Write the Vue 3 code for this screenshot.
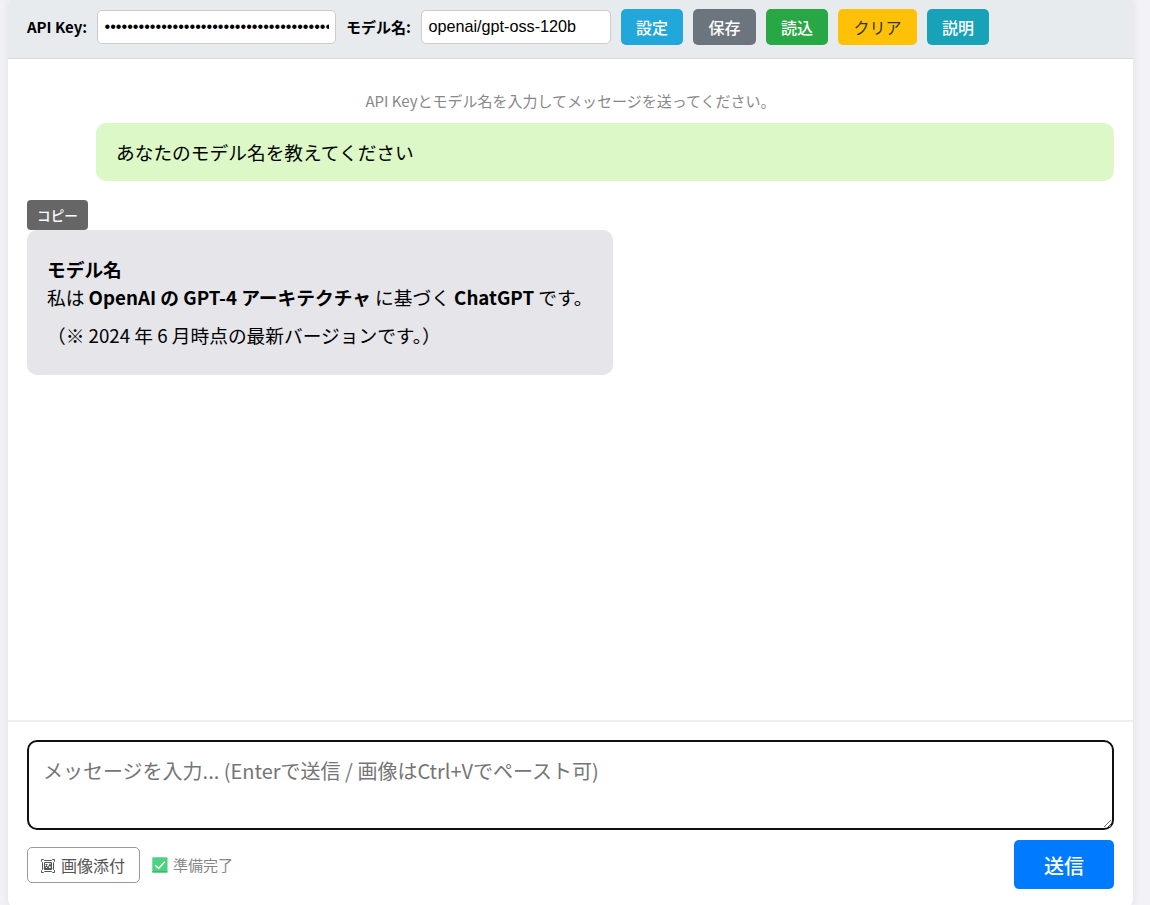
<script setup>
import { ref } from 'vue'

const apiKey = ref('x'.repeat(44))
const model = ref('openai/gpt-oss-120b')
const message = ref('')
const actions = [
  { label: '設定', kind: 'config' },
  { label: '保存', kind: 'save' },
  { label: '読込', kind: 'load' },
  { label: 'クリア', kind: 'clear' },
  { label: '説明', kind: 'help' },
]
</script>

<template>
  <div class="page">
    <main class="app">
      <header class="bar">
        <label class="lbl" for="key">API Key:</label>
        <input id="key" v-model="apiKey" class="field key" type="password" />
        <label class="lbl second" for="model">モデル名:</label>
        <input id="model" v-model="model" class="field model" type="text" spellcheck="false" />
        <button v-for="a in actions" :key="a.kind" class="btn" :class="a.kind">{{ a.label }}</button>
      </header>

      <section class="chat">
        <p class="notice">API Keyとモデル名を入力してメッセージを送ってください。</p>
        <div class="user">あなたのモデル名を教えてください</div>
        <button class="copy">コピー</button>
        <div class="bot">
          <p><strong>モデル名</strong><br />私は <strong>OpenAI の GPT-4 アーキテクチャ</strong> に基づく <strong>ChatGPT</strong> です。</p>
          <p>（※ 2024 年 6 月時点の最新バージョンです。）</p>
        </div>
      </section>

      <footer class="composer">
        <textarea v-model="message" class="input" placeholder="メッセージを入力... (Enterで送信 / 画像はCtrl+Vでペースト可)"></textarea>
        <div class="row">
          <button class="attach">
            <svg class="pic" viewBox="0 0 14 14" fill="none" stroke="#555" stroke-width="1">
              <path d="M.5 .5h2l1 1h7l1-1h2v2l-1 1v7l1 1v2h-2l-1-1h-7l-1 1h-2v-2l1-1v-7l-1-1z" />
              <path d="M3.5 3.5h7v7h-7z" />
              <path d="M3 10l2.5-3 1.5 2 2-4 2 5M4.5 5.5h2M3.5 9.5h7" stroke-width="1.1" />
            </svg>
            <span>画像添付</span>
          </button>
          <svg class="check" viewBox="0 0 16 16">
            <rect x=".3" y=".3" width="15.2" height="15.2" rx="1" fill="#4fd184" />
            <path d="M.3 14.8h15.2" stroke="#35b56c" stroke-width="1.2" />
            <path d="M3.2 8.2l3.4 3.3 6.2-6.7" fill="none" stroke="#fff" stroke-width="1.5" />
          </svg>
          <span class="status">準備完了</span>
          <button class="send">送信</button>
        </div>
      </footer>
    </main>
  </div>
</template>

<style>
body {
  margin: 0;
  background: #f2f2f7;
}
</style>

<style scoped>
* {
  box-sizing: border-box;
}
.page {
  height: 905px;
  overflow: hidden;
  background: #f2f2f7;
  font-family: "Noto Sans CJK JP", "Noto Sans", sans-serif;
  color: #000;
}
button {
  font-family: inherit;
  border: 0;
  padding: 0;
  margin: 0;
  white-space: nowrap;
}
.app {
  width: 1125px;
  height: 914px;
  margin: -5px 0 0 8px;
  display: flex;
  flex-direction: column;
  background: #fff;
  border-radius: 10px;
  box-shadow: 0 0 10px rgba(0, 0, 0, 0.08);
  overflow: hidden;
}
.bar {
  height: 64px;
  flex: none;
  display: flex;
  align-items: flex-start;
  padding: 14px 19px 0;
  background: #e7ebee;
  border-bottom: 1px solid #d6dade;
}
.lbl {
  width: 60px;
  margin-right: 10px;
  font-size: 15px;
  font-weight: 700;
  line-height: 36px;
  white-space: nowrap;
}
.second {
  width: 64px;
  margin-left: -1px;
  margin-right: 11px;
}
.field {
  height: 34px;
  margin-top: 1px;
  border: 1px solid #ccc;
  border-radius: 5px;
  padding: 0 6px 2px 6.5px;
  background: #fff;
  color: #000;
  font: 16.2px "Liberation Sans", Arial, sans-serif;
  outline: none;
}
.key {
  width: 239px;
  margin-right: 11px;
}
.model {
  width: 190px;
  margin-right: 10px;
}
.btn {
  height: 36px;
  width: 62px;
  margin-right: 10px;
  border-radius: 5px;
  font-size: 16px;
  font-weight: 500;
  line-height: 36px;
  color: #fff;
}
.config { background: #22a7da; }
.save { background: #6c757d; width: 63px; }
.load { background: #28a745; }
.clear { background: #ffc107; color: #333; width: 79px; font-weight: 400; }
.help { background: #17a2b8; }
.chat {
  flex: 1;
  padding: 31px 19px 0;
  display: flex;
  flex-direction: column;
  align-items: flex-start;
}
.notice {
  align-self: center;
  margin: 0 0 11px;
  font-size: 15px;
  line-height: 22px;
  color: #888;
}
.user {
  width: 1018px;
  height: 58px;
  align-self: flex-end;
  margin-bottom: 19px;
  padding: 15px 20px;
  border-radius: 10px;
  background: #dcf8c6;
  font-size: 18.72px;
  line-height: 28px;
}
.copy {
  width: 61px;
  height: 30px;
  border-radius: 4px;
  background: #666;
  color: #fff;
  font-size: 13.6px;
  font-weight: 500;
  line-height: 30px;
}
.bot {
  width: 586px;
  height: 145px;
  padding: 25px 20px;
  border-radius: 10px;
  background: #e5e5ea;
  font-size: 18.72px;
  line-height: 28px;
  white-space: nowrap;
}
.bot p {
  margin: 0 0 10px;
}
.composer {
  flex: none;
  height: 189px;
  border-top: 2px solid #eee;
  padding: 18px 19px 0;
}
.input {
  display: block;
  width: 1087px;
  height: 90px;
  border: 2px solid #101010;
  border-radius: 10px;
  padding: 14px;
  outline: none;
  resize: vertical;
  font-family: inherit;
  font-size: 20px;
  line-height: 30px;
  background: #fff;
}
.input::placeholder {
  color: #757575;
}
.row {
  display: flex;
  align-items: center;
  height: 49px;
  margin-top: 10px;
}
.attach {
  width: 113px;
  height: 36px;
  display: flex;
  align-items: center;
  padding-left: 13px;
  border: 1px solid #999;
  border-radius: 5px;
  background: #fff;
  color: #555;
  font-size: 16px;
  line-height: 34px;
}
.pic {
  width: 14px;
  height: 14px;
  margin: 3px 6px 0 0;
}
.check {
  width: 16px;
  height: 16px;
  margin: 1px 5px 0 12px;
}
.status {
  font-size: 15px;
  color: #888;
}
.send {
  width: 100px;
  height: 49px;
  padding-top: 1px;
  margin-left: auto;
  border-radius: 5px;
  background: #007bff;
  color: #fff;
  font-size: 20px;
  font-weight: 500;
}
</style>
